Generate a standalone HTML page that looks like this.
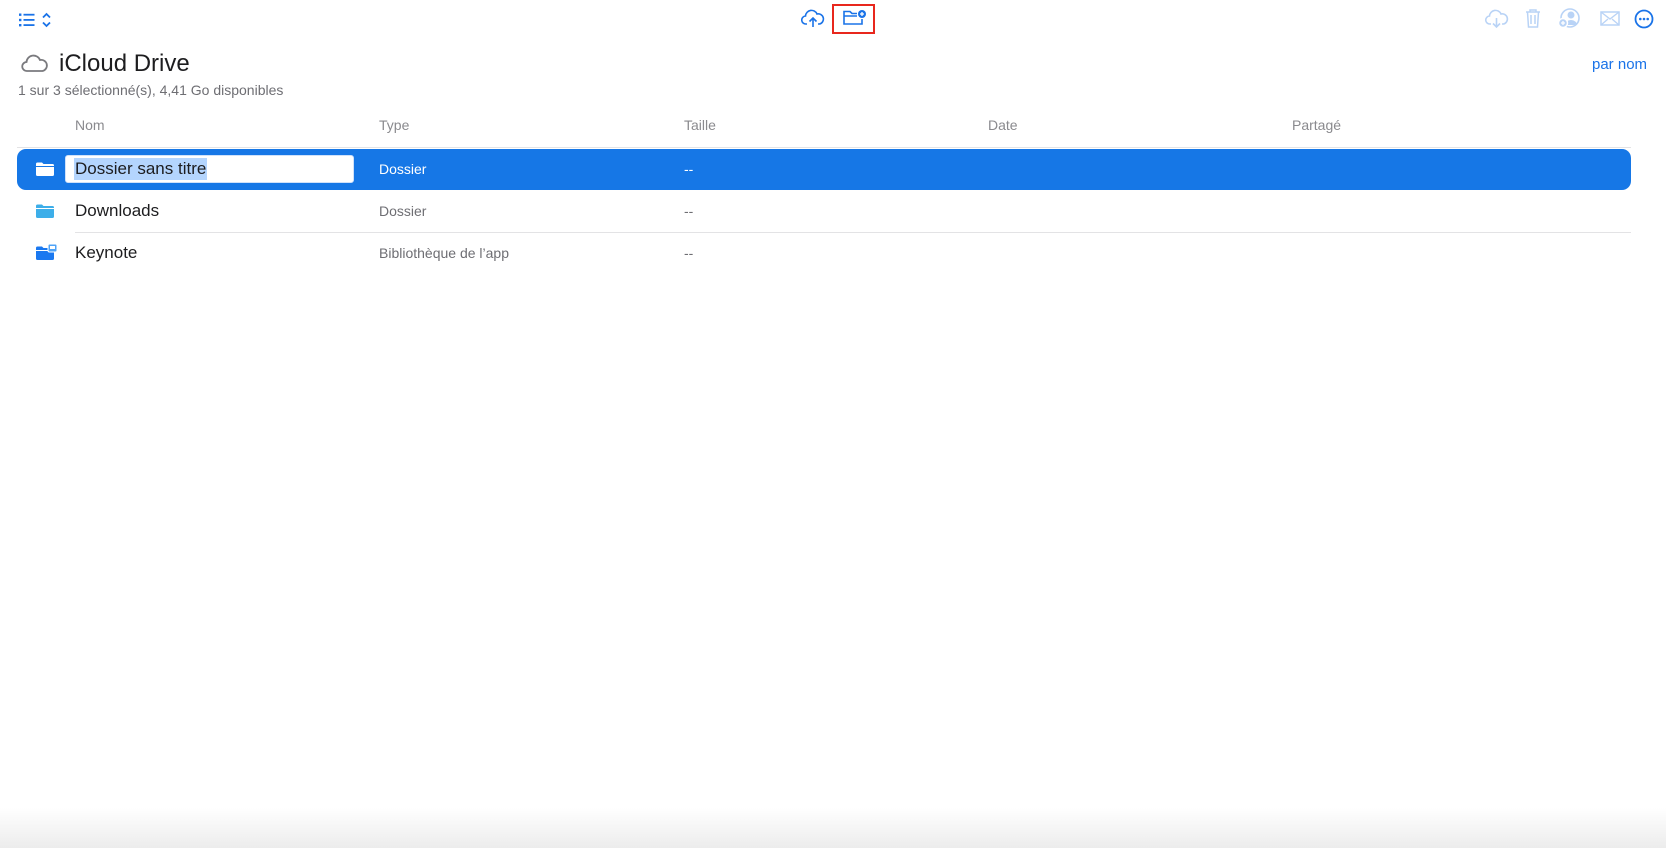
<!DOCTYPE html>
<html><head><meta charset="utf-8"><style>
*{margin:0;padding:0;box-sizing:border-box}
body{width:1666px;height:848px;background:#fff;font-family:"Liberation Sans",sans-serif;position:relative;overflow:hidden}
.a{position:absolute}
.h{color:#8a8a8e;font-size:14px;top:117px}
.t{font-size:14px;color:#6e6e73}
.n{font-size:17px;color:#1d1d1f}
</style></head><body>
<svg class="a" style="left:18px;top:12px" width="40" height="16" viewBox="0 0 40 16">
<g fill="#1a73e8"><rect x="1" y="1.5" width="2.4" height="2.4"/><rect x="1" y="6.8" width="2.4" height="2.4"/><rect x="1" y="12" width="2.4" height="2.4"/>
<rect x="5.5" y="1.8" width="11" height="1.8"/><rect x="5.5" y="7" width="11" height="1.8"/><rect x="5.5" y="12.2" width="11" height="1.8"/></g>
<path d="M25 5.5l3.5-3.5 3.5 3.5M25 10.5l3.5 3.5 3.5-3.5" fill="none" stroke="#1a73e8" stroke-width="1.8"/></svg>
<svg class="a" style="left:801px;top:9px" width="24" height="20" viewBox="0 0 24 20"><path d="M6 15H5a4 4 0 0 1-.5-8A6 6 0 0 1 16 5a4.5 4.5 0 0 1 2.5 10H17" fill="none" stroke="#1a73e8" stroke-width="1.6"/><path d="M12 18V9M8.5 12.5L12 9l3.5 3.5" fill="none" stroke="#1a73e8" stroke-width="1.6"/></svg>
<div class="a" style="left:832px;top:4px;width:43px;height:30px;border:2px solid #e8271d"></div>
<svg class="a" style="left:842px;top:8px" width="26" height="20" viewBox="0 0 26 20"><path d="M2 6V3.5h6l2 2h5M2 6v10h18V11M2 8h13" fill="none" stroke="#1a73e8" stroke-width="1.6"/><circle cx="20" cy="6" r="4" fill="#1a73e8"/><path d="M20 4v4M18 6h4" stroke="#fff" stroke-width="1.3"/></svg>
<svg class="a" style="left:1484px;top:9px" width="26" height="20" viewBox="0 0 26 20"><path d="M7 15H6a4 4 0 0 1-.5-8A6 6 0 0 1 17 5a4.5 4.5 0 0 1 2.5 10H18" fill="none" stroke="#b9d3f6" stroke-width="1.6"/><path d="M12.5 9v9M9 14.5l3.5 3.5 3.5-3.5" fill="none" stroke="#b9d3f6" stroke-width="1.6"/></svg>
<svg class="a" style="left:1524px;top:8px" width="18" height="20" viewBox="0 0 18 20"><path d="M2 4h14M6 4V2h6v2M3.5 4l1 15h9l1-15M7 7v9M11 7v9" fill="none" stroke="#b9d3f6" stroke-width="1.5"/></svg>
<svg class="a" style="left:1557px;top:8px" width="24" height="22" viewBox="0 0 24 22"><circle cx="13" cy="10" r="9" fill="none" stroke="#b9d3f6" stroke-width="1.6"/><circle cx="14" cy="7" r="3.5" fill="#b9d3f6"/><path d="M8 17a6 5 0 0 1 12 0" fill="#b9d3f6"/><circle cx="6" cy="15" r="4.5" fill="#b9d3f6" stroke="#fff" stroke-width="1.5"/><path d="M6 13v4M4 15h4" stroke="#fff" stroke-width="1.3"/></svg>
<svg class="a" style="left:1600px;top:11px" width="20" height="16" viewBox="0 0 20 16"><rect x="1" y="1" width="18" height="13" fill="none" stroke="#b9d3f6" stroke-width="1.5"/><path d="M1 1l9 7 9-7M1 14l7-6M19 14l-7-6" fill="none" stroke="#b9d3f6" stroke-width="1.3"/></svg>
<svg class="a" style="left:1634px;top:9px" width="20" height="20" viewBox="0 0 20 20"><circle cx="10" cy="10" r="8.5" fill="none" stroke="#1a73e8" stroke-width="1.8"/><circle cx="6.3" cy="10" r="1.3" fill="#1a73e8"/><circle cx="10" cy="10" r="1.3" fill="#1a73e8"/><circle cx="13.7" cy="10" r="1.3" fill="#1a73e8"/></svg>
<svg class="a" style="left:21px;top:54px" width="28" height="20" viewBox="0 0 28 20"><path d="M7 17H6a4.5 4.5 0 0 1-.5-9A7 7 0 0 1 19 6a5 5 0 0 1 2.5 11z" fill="none" stroke="#7a7a7e" stroke-width="1.8"/></svg>
<div class="a" style="left:59px;top:50px;font-size:24px;color:#1d1d1f">iCloud Drive</div>
<div class="a" style="left:18px;top:82px;font-size:14px;color:#6e6e73">1 sur 3 sélectionné(s), 4,41 Go disponibles</div>
<div class="a" style="left:1592px;top:56px;font-size:15px;color:#1a73e8">par nom</div>
<div class="a h" style="left:75px">Nom</div><div class="a h" style="left:379px">Type</div><div class="a h" style="left:684px">Taille</div><div class="a h" style="left:988px">Date</div><div class="a h" style="left:1292px">Partagé</div>
<div class="a" style="left:17px;top:147px;width:1614px;height:1px;background:#e3e3e5"></div>
<div class="a" style="left:17px;top:149px;width:1614px;height:41px;background:#1677e6;border-radius:9px"></div>
<svg class="a" style="left:36px;top:162px" width="18" height="14" viewBox="0 0 18 14"><path d="M0 2a1.5 1.5 0 0 1 1.5-1.5h4.5l1.5 1.5h9A1.5 1.5 0 0 1 18 3.5V12.5A1.5 1.5 0 0 1 16.5 14h-15A1.5 1.5 0 0 1 0 12.5z" fill="#fff"/><rect x="0" y="4" width="18" height="1" fill="#1677e6"/></svg>
<div class="a" style="left:65px;top:155px;width:289px;height:28px;border:1.5px solid #cfe1fa;border-radius:3px;background:#fff"></div>
<div class="a" style="left:74px;top:158px;height:22px;background:#b4d5fe;padding:1px 1px;font-size:17px;color:#1d1d1f;line-height:20px">Dossier sans titre</div>
<div class="a t" style="left:379px;top:161px;color:#fff">Dossier</div><div class="a t" style="left:684px;top:161px;color:#fff">--</div>
<svg class="a" style="left:36px;top:204px" width="18" height="14" viewBox="0 0 18 14"><path d="M0 2a1.5 1.5 0 0 1 1.5-1.5h4.5l1.5 1.5h9A1.5 1.5 0 0 1 18 3.5V12.5A1.5 1.5 0 0 1 16.5 14h-15A1.5 1.5 0 0 1 0 12.5z" fill="#3daee9"/><rect x="0" y="4" width="18" height="1" fill="#fff"/></svg>
<div class="a n" style="left:75px;top:201px">Downloads</div><div class="a t" style="left:379px;top:203px">Dossier</div><div class="a t" style="left:684px;top:203px">--</div>
<div class="a" style="left:75px;top:232px;width:1556px;height:1px;background:#e3e3e5"></div>
<svg class="a" style="left:36px;top:244px" width="22" height="16" viewBox="0 0 22 16"><path d="M0 4a1.5 1.5 0 0 1 1.5-1.5h4.5l1.5 1.5h9A1.5 1.5 0 0 1 18 5.5V14.5A1.5 1.5 0 0 1 16.5 16h-15A1.5 1.5 0 0 1 0 14.5z" fill="#1a78f0"/><rect x="0" y="6" width="18" height="1" fill="#fff"/><rect x="12" y="0" width="9" height="8" rx="1.5" fill="#4fa3f7" stroke="#fff"/><rect x="14" y="2" width="5" height="3" fill="#fff"/></svg>
<div class="a n" style="left:75px;top:243px">Keynote</div><div class="a t" style="left:379px;top:245px">Bibliothèque de l’app</div><div class="a t" style="left:684px;top:245px">--</div>
<div class="a" style="left:0;top:808px;width:1666px;height:40px;background:linear-gradient(#fff,#ececec)"></div>
</body></html>
